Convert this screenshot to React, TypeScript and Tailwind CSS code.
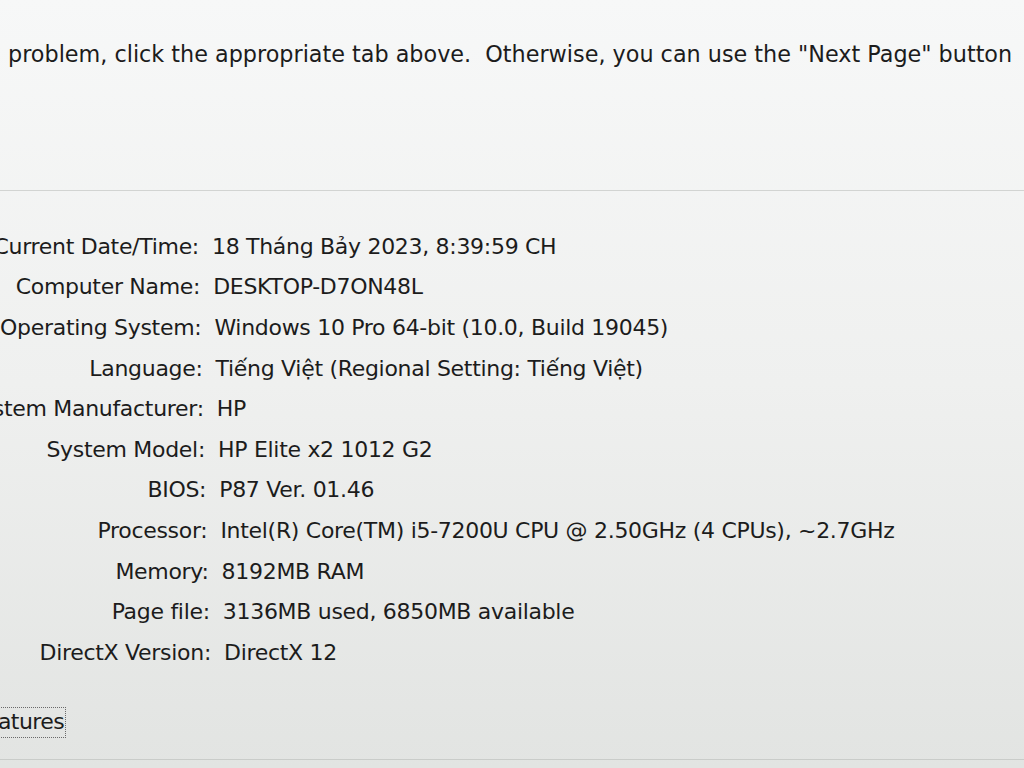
import React from "react";

const rows: [string, string][] = [
  ["Current Date/Time:", "18 Tháng Bảy 2023, 8:39:59 CH"],
  ["Computer Name:", "DESKTOP-D7ON48L"],
  ["Operating System:", "Windows 10 Pro 64-bit (10.0, Build 19045)"],
  ["Language:", "Tiếng Việt (Regional Setting: Tiếng Việt)"],
  ["System Manufacturer:", "HP"],
  ["System Model:", "HP Elite x2 1012 G2"],
  ["BIOS:", "P87 Ver. 01.46"],
  ["Processor:", "Intel(R) Core(TM) i5-7200U CPU @ 2.50GHz (4 CPUs), ~2.7GHz"],
  ["Memory:", "8192MB RAM"],
  ["Page file:", "3136MB used, 6850MB available"],
  ["DirectX Version:", "DirectX 12"],
];

export default function App() {
  return (
    <div
      className="w-[1024px] h-[768px] overflow-hidden bg-gradient-to-b from-[#f7f8f8] via-[#eff0ef] to-[#e2e4e2] text-[#1c1c1c] text-[22px] flex flex-col"
      style={{ fontFamily: '"DejaVu Sans", Verdana, sans-serif' }}
    >
      <div className="h-[190px] pt-[38px] pl-[8px] whitespace-pre text-[22.3px]">
        {'problem, click the appropriate tab above.  Otherwise, you can use the "Next Page" button'}
      </div>
      <div className="border-t border-[#d2d4d2] pt-[35px] flex flex-col">
        {rows.map(([label, value], i) => (
          <div
            key={label}
            className="h-[40.6px] flex items-center whitespace-nowrap tracking-[-0.3px]"
            style={{ paddingLeft: `${i * 1.2}px` }}
          >
            <div className="w-[260px] ml-[-61px] text-right shrink-0">{label}</div>
            <div className="ml-[13px]">{value}</div>
          </div>
        ))}
      </div>
      <div className="mt-[34px] flex">
        <div className="w-[66px] flex justify-end">
          <div className="whitespace-nowrap border border-dotted border-[#6a6a6a] px-[1px] h-[31px] leading-[28px] tracking-[-0.6px]">
            Check for WHQL digital signatures
          </div>
        </div>
      </div>
      <div className="mt-[21px] border-t border-[#c9ccc9]" />
    </div>
  );
}
